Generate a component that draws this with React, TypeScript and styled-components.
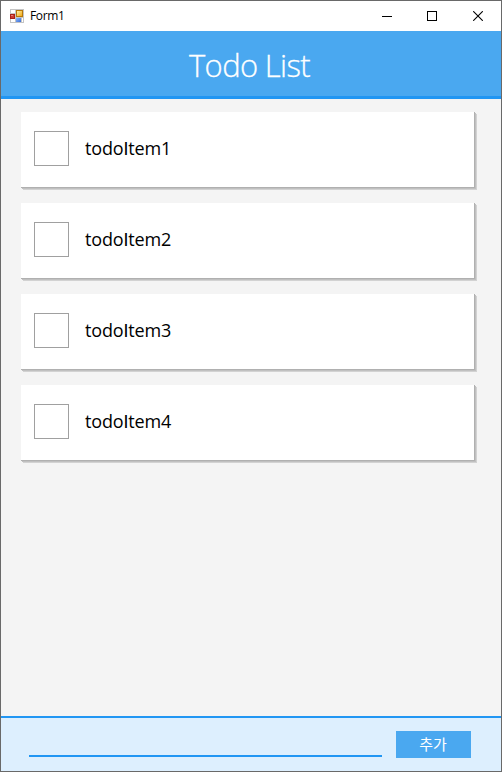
import React from 'react';
import styled, { createGlobalStyle } from 'styled-components';

const GlobalStyle = createGlobalStyle`
  * { box-sizing: border-box; }
  body { margin: 0; overflow: hidden; }
`;

const Window = styled.div`
  width: 502px;
  height: 772px;
  display: flex;
  flex-direction: column;
  border: 1px solid #696969;
  background: #f4f4f4;
  font-family: 'Open Sans', 'Noto Sans CJK KR', sans-serif;
  color: #000;
`;

const TitleBar = styled.div`
  height: 30px;
  flex: none;
  display: flex;
  align-items: center;
  padding-left: 9px;
  background: #fff;
`;

const Caption = styled.span`
  flex: 1;
  margin-left: 6px;
  font-size: 12px;
  line-height: 16px;
  letter-spacing: -0.35px;
`;

const WindowButton = styled.button`
  width: 46px;
  height: 30px;
  padding: 0;
  border: 0;
  background: transparent;
  display: flex;
  align-items: center;
  justify-content: center;
  &:first-of-type { padding-left: 2px; }
`;

const Header = styled.header`
  height: 68px;
  flex: none;
  display: flex;
  justify-content: center;
  background: #4aa8f0;
  border-bottom: 3px solid #2196f3;
`;

const Title = styled.h1`
  margin: 0;
  padding-right: 3px;
  font-size: 31px;
  font-weight: 300;
  line-height: 68px;
  letter-spacing: -0.65px;
  color: #fff;
  -webkit-text-stroke: 0.3px #fff;
`;

const List = styled.main`
  flex: 1;
  display: flex;
  flex-direction: column;
  gap: 15px;
  padding: 13px 26px 0 20px;
`;

const Card = styled.label`
  height: 76px;
  display: flex;
  align-items: center;
  padding: 0 0 2px 13px;
  background: #fff;
  border: solid #b0b0b0;
  border-width: 0 1px 1px 0;
  box-shadow: 1px 1px 0 #c0c0c0, 2px 2px 0 #d2d2d2;
`;

const CheckBox = styled.span`
  width: 35px;
  height: 35px;
  border: 1px solid #a0a0a0;
`;

const ItemText = styled.span`
  margin-left: 16px;
  font-size: 18px;
  line-height: 24px;
  letter-spacing: -0.15px;
`;

const PlainCapital = styled.span`
  font-family: Roboto, 'Liberation Sans', sans-serif;
  font-weight: 400;
`;

const Footer = styled.footer`
  height: 55px;
  flex: none;
  display: flex;
  align-items: flex-start;
  padding: 13px 30px 0 28px;
  background: #ddeffe;
  border-top: 2px solid #2196f3;
`;

const TodoInput = styled.input`
  flex: 1;
  min-width: 0;
  height: 26px;
  padding: 0;
  margin-right: 14px;
  border: 0;
  border-bottom: 2px solid #2196f3;
  background: transparent;
  font: inherit;
  outline: none;
`;

const AddButton = styled.button`
  width: 75px;
  height: 27px;
  padding: 0 1px 2px 0;
  border: 0;
  background: #4aa8f0;
  color: #fff;
  font-family: 'Noto Sans CJK KR', sans-serif;
  font-size: 15px;
  line-height: 25px;
`;

const FormIcon = () => (
  <svg width="14" height="14" viewBox="1 1 14 14" shapeRendering="crispEdges">
    <defs>
      <linearGradient id="gold" x1="0" y1="0" x2="1" y2="1">
        <stop offset="0" stopColor="#fff0a0" />
        <stop offset="1" stopColor="#f0a818" />
      </linearGradient>
      <linearGradient id="blue" x1="0" y1="0" x2="1" y2="1">
        <stop offset="0" stopColor="#8ab8fa" />
        <stop offset="1" stopColor="#3a6cd8" />
      </linearGradient>
    </defs>
    <path d="M1 1h14v14H1z" fill="#c4c4c4" />
    <path d="M2 2h4v3H2zM2 11h4v3H2zM13 10h1v4h-1z" fill="#fff" />
    <path d="M1 6h5v5H1z" fill="#a82018" />
    <path d="M2 7h3v3H2z" fill="#cc3a30" />
    <path d="M2 7h2v1H2z" fill="#e88078" />
    <path d="M7 2h7v7H7z" fill="#b87808" />
    <path d="M8 3h5v5H8z" fill="url(#gold)" />
    <path d="M7 10h5v4H7z" fill="url(#blue)" />
  </svg>
);

const items = ['todoItem1', 'todoItem2', 'todoItem3', 'todoItem4'];

const ItemLabel = ({ text }: { text: string }) => {
  const [before, after] = text.split('I');
  return (
    <ItemText>
      {before}
      <PlainCapital>I</PlainCapital>
      {after}
    </ItemText>
  );
};

export default function App() {
  return (
    <>
      <GlobalStyle />
      <Window>
        <TitleBar>
          <FormIcon />
          <Caption>Form1</Caption>
          <WindowButton aria-label="Minimize">
            <svg width="10" height="10" shapeRendering="crispEdges">
              <path d="M0 5h10v1H0z" />
            </svg>
          </WindowButton>
          <WindowButton aria-label="Maximize">
            <svg width="10" height="10" shapeRendering="crispEdges">
              <path d="M.5 .5h9v9h-9z" fill="none" stroke="#000" />
            </svg>
          </WindowButton>
          <WindowButton aria-label="Close">
            <svg width="10" height="10">
              <path d="M.2 .2l9.6 9.6M9.8 .2L.2 9.8" fill="none" stroke="#000" strokeWidth="1.1" />
            </svg>
          </WindowButton>
        </TitleBar>
        <Header>
          <Title>Todo List</Title>
        </Header>
        <List>
          {items.map((item) => (
            <Card key={item}>
              <CheckBox />
              <ItemLabel text={item} />
            </Card>
          ))}
        </List>
        <Footer>
          <TodoInput aria-label="Todo" />
          <AddButton>추가</AddButton>
        </Footer>
      </Window>
    </>
  );
}
